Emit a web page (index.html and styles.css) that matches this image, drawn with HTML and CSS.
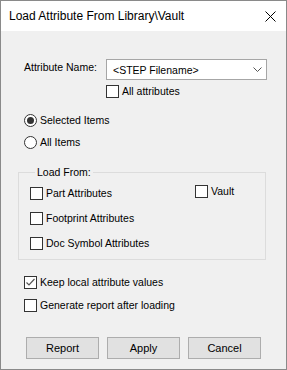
FILE: index.html
```html
<!DOCTYPE html>
<html lang="en">
<head>
    <meta charset="utf-8" />
    <title>Load Attribute From Library\Vault</title>
    <link rel="stylesheet" href="styles.css">
</head>
<body>
    <div class="window">
        <div class="titlebar">
            <span class="title">Load Attribute From Library\Vault</span>
            <svg class="close" width="11" height="11" viewBox="0 0 11 11"><path d="M0.5 0.5 L10.5 10.5 M10.5 0.5 L0.5 10.5" stroke="#000" stroke-width="1" fill="none"/></svg>
        </div>

        <div class="content">
            <div class="namerow">
                <label class="namelabel">Attribute Name:</label>
                <div class="combo">
                    <span>&lt;STEP Filename&gt;</span>
                    <svg class="chevron" width="9" height="5" viewBox="0 0 9 5"><path d="M0.5 0.5 L4.5 4.5 L8.5 0.5" stroke="#555" stroke-width="1" fill="none"/></svg>
                </div>
            </div>
            <div class="check allattr"><span class="box"></span>All attributes</div>

            <div class="radio selected"><span class="circle on"></span>Selected Items</div>
            <div class="radio allitems"><span class="circle"></span>All Items</div>

            <fieldset class="group">
                <legend>Load From:</legend>
                <div class="group_inner">
                    <div class="leftcol">
                        <div class="check"><span class="box"></span>Part Attributes</div>
                        <div class="check"><span class="box"></span>Footprint Attributes</div>
                        <div class="check"><span class="box"></span>Doc Symbol Attributes</div>
                    </div>
                    <div class="rightcol">
                        <div class="check"><span class="box"></span>Vault</div>
                    </div>
                </div>
            </fieldset>

            <div class="check keep"><span class="box"><svg width="11" height="11" viewBox="0 0 11 11"><path d="M1.5 5.5 L4 8 L9.5 2" stroke="#555" stroke-width="1.2" fill="none"/></svg></span>Keep local attribute values</div>
            <div class="check generate"><span class="box"></span>Generate report after loading</div>

            <div class="buttons">
                <button class="btn">Report</button>
                <button class="btn">Apply</button>
                <button class="btn">Cancel</button>
            </div>
        </div>
    </div>
</body>
</html>
```

FILE: styles.css
```css
* {
    margin: 0px;
    padding: 0px;
    box-sizing: border-box;
}

body {
    font-family: 'Liberation Sans', Arial, sans-serif;
    font-size: 10.5px;
    color: #000;
}

.window {
    width: 287px;
    height: 370px;
    border: 1px solid #8a8a8a;
    background: #f0f0f0;
}

.titlebar {
    height: 30px;
    background: #fff;
    display: flex;
    align-items: center;
    padding-left: 8px;
    padding-right: 10px;
}

    .titlebar .title {
        font-size: 12px;
        flex: 1;
    }

    .titlebar .close {
        margin-top: 1px;
    }

.content {
    padding-left: 23px;
    display: flex;
    flex-direction: column;
}

.namerow {
    display: flex;
    align-items: flex-start;
    margin-top: 28px;
    height: 21px;
}

.namelabel {
    width: 82px;
    line-height: 13px;
    margin-top: 2px;
}

.combo {
    width: 161px;
    height: 21px;
    border: 1px solid #a6a6a6;
    background: #fff;
    display: flex;
    align-items: center;
    justify-content: space-between;
    padding-left: 6px;
    padding-right: 4px;
}

.check,
.radio {
    display: flex;
    align-items: center;
    height: 13px;
    line-height: 13px;
    gap: 3px;
    white-space: nowrap;
}

.box {
    width: 13px;
    height: 13px;
    border: 1px solid #333;
    background: #fff;
    display: flex;
    align-items: center;
    justify-content: center;
    flex-shrink: 0;
}

.circle {
    width: 13px;
    height: 13px;
    border: 1px solid #333;
    border-radius: 50%;
    background: #fff;
    display: flex;
    align-items: center;
    justify-content: center;
    flex-shrink: 0;
}

    .circle.on:after {
        content: '';
        width: 7px;
        height: 7px;
        border-radius: 50%;
        background: #333;
    }

.allattr {
    margin-left: 82px;
    margin-top: 5px;
}

.selected {
    margin-top: 16px;
}

.allitems {
    margin-top: 9px;
}

.group {
    margin-top: 17px;
    margin-left: -6px;
    width: 248px;
    border: 1px solid #dcdcdc;
    padding: 8px 0px 9px 11px;
}

    .group legend {
        margin-left: 5px;
        padding: 0px 2px;
        line-height: 13px;
    }

.group_inner {
    display: flex;
}

.leftcol {
    width: 165px;
    display: flex;
    flex-direction: column;
    gap: 12px;
}

.rightcol {
    margin-top: -2px;
}

.keep {
    margin-top: 16px;
}

.generate {
    margin-top: 10px;
}

.buttons {
    display: flex;
    gap: 8px;
    margin-top: 25px;
    margin-left: 2px;
}

.btn {
    width: 73px;
    height: 22px;
    background: #e1e1e1;
    border: 1px solid #adadad;
    font-family: 'Liberation Sans', Arial, sans-serif;
    font-size: 11px;
    color: #000;
}
```
